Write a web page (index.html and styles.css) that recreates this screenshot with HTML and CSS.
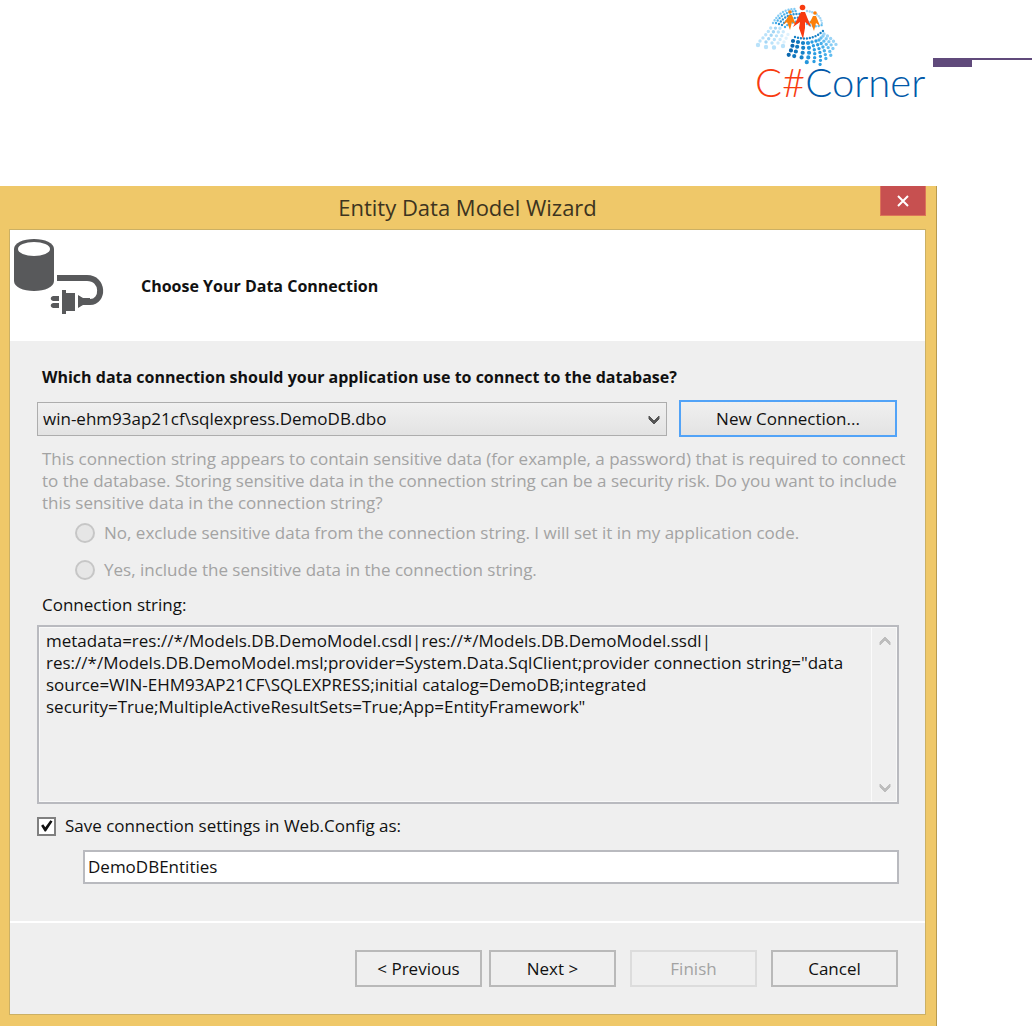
FILE: index.html
```html
<!DOCTYPE html>
<html lang="en">
<head>
  <meta charset="UTF-8">
  <meta name="viewport" content="width=device-width, initial-scale=1.0">
  <title>Entity Data Model Wizard</title>
  <link rel="stylesheet" href="styles.css">
</head>
<body>
<header class="page-header">
  <div class="logo">
    <svg class="logo-mark" width="84" height="62" viewBox="0 0 84 62" fill="none" stroke-linecap="round">
      <!-- upper swirl -->
      <g stroke-width="3.4">
        <path d="M5 37 Q12 30 17 22" stroke="#b9e2fa" stroke-dasharray="0 4.2"/>
        <path d="M11 38 Q17 31 21 23" stroke="#a3d6f5" stroke-dasharray="0 4.2"/>
        <path d="M17 39 Q22 32 25 24" stroke="#b9e2fa" stroke-dasharray="0 4.2"/>
        <path d="M23 39 Q27 33 29 25" stroke="#cdeafb" stroke-dasharray="0 4.2"/>
        <path d="M29 38 Q32 33 34 28" stroke="#e0f2fd" stroke-dasharray="0 4.2"/>
      </g>
      <g stroke-width="2.4">
        <path d="M18 19 Q26 4 42 5" stroke="#83cbf4" stroke-dasharray="0 3"/>
        <path d="M21 19 Q28 7 43 7" stroke="#46aee9" stroke-dasharray="0 3"/>
        <path d="M24 20 Q31 9 46 10" stroke="#2a91d2" stroke-dasharray="0 3"/>
        <path d="M27 21 Q34 12 50 14" stroke="#2a91d2" stroke-dasharray="0 3"/>
        <path d="M30 23 Q38 15 56 18" stroke="#46aee9" stroke-dasharray="0 3"/>
        <path d="M52 7 Q66 9 67 20" stroke="#a3d6f5" stroke-dasharray="0 2.6"/>
        <path d="M52 20 Q60 24 67 21" stroke="#62bdf0" stroke-dasharray="0 3"/>
      </g>
      <path d="M3 41h0M11 43h0M19 43.500h0M28 42h0" stroke="#b9e2fa" stroke-width="4.400"/>
      <!-- lower swirl -->
      <g stroke-width="4.2">
        <path d="M38 37 Q38 44 33 52" stroke="#0a68b0" stroke-dasharray="0 4.9"/>
        <path d="M43 38 Q42 46 38 55" stroke="#0f76bd" stroke-dasharray="0 4.9"/>
        <path d="M48 39 Q49 48 45 58" stroke="#1682c8" stroke-dasharray="0 4.9"/>
        <path d="M53 39 Q56 49 51 60" stroke="#2596dc" stroke-dasharray="0 4.9"/>
      </g>
      <g stroke-width="3.4">
        <path d="M57 38 Q62 50 58 61" stroke="#2b9de2" stroke-dasharray="0 4"/>
        <path d="M61 37 Q67 49 65 61" stroke="#2b9de2" stroke-dasharray="0 4"/>
        <path d="M64 36 Q71 46 71 58" stroke="#46aee9" stroke-dasharray="0 4"/>
        <path d="M66 34 Q75 43 76 53" stroke="#62bdf0" stroke-dasharray="0 4"/>
        <path d="M68 32 Q77 39 79 48" stroke="#83cbf4" stroke-dasharray="0 4"/>
        <path d="M69 30 Q77 34 82 42" stroke="#9bd4f6" stroke-dasharray="0 4"/>
      </g>
      <path d="M40 33 Q56 38 68 27" stroke="#1682c8" stroke-width="2.4" stroke-dasharray="0 3"/>
      <!-- people -->
      <g fill="#fb7f0a">
        <circle cx="35" cy="8" r="1.800"/>
        <path d="M34 11h3l4 10-4-3-2 8-3-8-4 3z"/>
        <circle cx="60" cy="9" r="1.800"/>
        <path d="M58 12h3l4 10-4-3-2 8-3-8-3 3z"/>
      </g>
      <g fill="#f83b10">
        <circle cx="47.500" cy="3.500" r="2.800"/>
        <path d="M46 8h4l6 15-6-5v6l-2 11-4-11 1-6-7 5z"/>
      </g>
    </svg>
    <div class="logo-text"><span class="logo-sharp">C#</span>Corner</div>
  </div>
  <div class="header-rule"></div>
</header>

<main class="window">
  <div class="title-bar">
    <h1>Entity Data Model Wizard</h1>
    <button class="close-button" type="button" aria-label="Close">
      <svg width="12" height="12" viewBox="0 0 12 12"><path d="M1 1l10 10M11 1L1 11" stroke="#fff" stroke-width="2"/></svg>
    </button>
  </div>

  <form class="wizard">
    <div class="banner">
      <svg width="90" height="78" viewBox="0 0 90 78">
        <path d="M0 10C0 4 9 0 20 0s20 4 20 10v32c0 6-9 10-20 10S0 48 0 42z" fill="#58595b"/>
        <ellipse cx="20" cy="10" rx="16" ry="7" fill="#fff"/>
        <path d="M43 39h30c17 0 17 24 3 24h-3" fill="none" stroke="#58595b" stroke-width="6"/>
        <path d="M48 51h4v3h9v18h-9v3h-4zM64 56l5 3h7v7h-7l-5 3zM45 57v5h-6c-3-1-3-4 0-5zM45 64v5h-6c-3-1-3-4 0-5z" fill="#58595b"/>
      </svg>
      <h2>Choose Your Data Connection</h2>
    </div>

    <div class="content">
      <label class="question" for="connection">Which data connection should your application use to connect to the database?</label>
      <div class="connection-row">
        <div class="select-box">
          <select id="connection" name="connection">
            <option>win-ehm93ap21cf\sqlexpress.DemoDB.dbo</option>
          </select>
          <svg class="select-arrow" width="12" height="10" viewBox="0 0 12 10"><path d="M1 1l5 5 5-5v3L6 9 1 4z" fill="#555" stroke="#555"/></svg>
        </div>
        <button class="new-connection" type="button">New Connection...</button>
      </div>

      <p class="notice">This connection string appears to contain sensitive data (for example, a password) that is required to connect<br>to the database. Storing sensitive data in the connection string can be a security risk. Do you want to include<br>this sensitive data in the connection string?</p>
      <div class="options">
        <label><input type="radio" name="sensitive" value="no" disabled>No, exclude sensitive data from the connection string. I will set it in my application code.</label>
        <label><input type="radio" name="sensitive" value="yes" disabled>Yes, include the sensitive data in the connection string.</label>
      </div>

      <label class="string-label" for="connection_string">Connection string:</label>
      <div class="string-box">
        <textarea id="connection_string" name="connection_string" readonly>metadata=res://*/Models.DB.DemoModel.csdl|res://*/Models.DB.DemoModel.ssdl|
res://*/Models.DB.DemoModel.msl;provider=System.Data.SqlClient;provider connection string="data
source=WIN-EHM93AP21CF\SQLEXPRESS;initial catalog=DemoDB;integrated
security=True;MultipleActiveResultSets=True;App=EntityFramework"</textarea>
        <div class="scroll-track">
          <svg width="12" height="10" viewBox="0 0 12 10"><path d="M1 9l5-5 5 5V6L6 1 1 6z" fill="#bdbdbd" stroke="#bdbdbd"/></svg>
          <svg width="12" height="10" viewBox="0 0 12 10"><path d="M1 1l5 5 5-5v3L6 9 1 4z" fill="#bdbdbd" stroke="#bdbdbd"/></svg>
        </div>
      </div>

      <label class="save-row"><input type="checkbox" name="save_settings" checked>Save connection settings in Web.Config as:</label>
      <input class="entity-name" type="text" name="entity_name" value="DemoDBEntities" aria-label="Connection settings name">
    </div>

    <div class="actions">
      <button type="button">&lt; Previous</button>
      <button class="next" type="button">Next &gt;</button>
      <button class="finish" type="button" disabled>Finish</button>
      <button type="button">Cancel</button>
    </div>
  </form>
</main>
</body>
</html>
```
FILE: styles.css
```css
* {
  box-sizing: border-box;
}
body {
  margin: 0;
  background: #fff;
  color: #111;
  font-family: "Open Sans", "Noto Sans", sans-serif;
  font-size: 17px;
  line-height: 22px;
}
h1, h2, p {
  margin: 0;
}
button, input, select, textarea {
  font: inherit;
  color: inherit;
}
svg {
  display: block;
}
.page-header {
  display: flex;
  justify-content: flex-end;
  height: 186px;
  padding-top: 4px;
}
.logo {
  width: 178px;
}
.logo-text {
  color: #0059a9;
  font-family: "Lato", "Inter", sans-serif;
  font-size: 40px;
  font-weight: 300;
  line-height: 32px;
}
.logo-sharp {
  color: #f83b10;
}
.header-rule {
  width: 99px;
  height: 9px;
  margin-top: 54px;
  background: linear-gradient(#604a7b, #604a7b) 0 0 / 39px 9px no-repeat;
  border-top: 2px solid #604a7b;
}
.window {
  margin-right: 95px;
  padding: 0 10px 11px 9px;
  background: #efc869;
  border-right: 1px solid #b89a4e;
  border-bottom: 1px solid #b89a4e;
}
.title-bar {
  display: flex;
  align-items: flex-start;
  height: 43px;
}
.title-bar h1 {
  flex: 1;
  padding-left: 46px;
  font-size: 22px;
  font-weight: 400;
  line-height: 42px;
  text-align: center;
  color: #3d3420;
}
.close-button {
  display: flex;
  align-items: center;
  justify-content: center;
  width: 46px;
  height: 30px;
  padding: 0;
  background: #c75050;
  border: 1px solid #dc7358;
  border-top: 0;
}
.wizard {
  background: #efefef;
  border: 1px solid #cbb064;
}
.banner {
  display: flex;
  align-items: center;
  height: 111px;
  padding: 0 4px;
  background: #fff;
}
.banner svg {
  margin-top: -16px;
}
.banner h2 {
  padding-left: 37px;
  font-size: 16px;
}
.content {
  display: flex;
  flex-direction: column;
  height: 580px;
  padding: 25px 26px 0 27px;
}
.question {
  margin-left: 5px;
  font-size: 16px;
  font-weight: 700;
}
.connection-row {
  display: flex;
  align-items: center;
  gap: 12px;
  margin: 12px 2px 11px 0;
}
.select-box {
  position: relative;
  flex: 1;
}
.select-box select {
  width: 100%;
  height: 34px;
  padding: 0 5px;
  appearance: none;
  background: linear-gradient(#f0f0f0, #e3e3e3);
  border: 1px solid #adadad;
  border-radius: 0;
}
.select-arrow {
  position: absolute;
  top: 13px;
  right: 7px;
  pointer-events: none;
}
.new-connection {
  width: 218px;
  height: 37px;
  background: linear-gradient(#f0f0f0, #e3e3e3);
  border: 2px solid #52a3f7;
}
.notice {
  margin-left: 5px;
  color: #a3a3a3;
  white-space: nowrap;
}
.options {
  display: flex;
  flex-direction: column;
  gap: 15px;
  margin: 8px 0 13px 38px;
  color: #a3a3a3;
}
.options label, .save-row {
  display: flex;
  align-items: center;
}
.options input {
  appearance: none;
  width: 20px;
  height: 20px;
  margin: 0 9px 0 0;
  background: #e6e6e6;
  border: 2px solid #c6c6c6;
  border-radius: 50%;
}
.string-label {
  margin-left: 5px;
}
.string-box {
  display: flex;
  height: 179px;
  margin: 9px 0 11px;
  border: 2px solid #b9babf;
  box-shadow: inset 0 0 0 1px #f8f8f8;
}
.string-box textarea {
  flex: 1;
  min-width: 0;
  padding: 3px 7px;
  background: none;
  border: 0;
  resize: none;
  white-space: pre;
  overflow: hidden;
}
.scroll-track {
  display: flex;
  flex-direction: column;
  align-items: center;
  justify-content: space-between;
  width: 26px;
  padding: 9px 0;
  border-left: 1px solid #fbfbfb;
}
.save-row input {
  appearance: none;
  width: 19px;
  height: 19px;
  margin: 0 9px 0 0;
  background: #fff;
  border: 2px solid #808080;
}
.save-row input:checked::before {
  content: "";
  display: block;
  width: 15px;
  height: 15px;
  background: #111;
  clip-path: polygon(14% 48%, 28% 38%, 42% 58%, 76% 12%, 90% 20%, 46% 86%, 38% 86%);
}
.entity-name {
  height: 34px;
  margin: 13px 0 0 46px;
  padding: 0 3px 2px;
  background: #fff;
  border: 2px solid #b9babf;
}
.actions {
  display: flex;
  justify-content: flex-end;
  height: 93px;
  padding: 27px 27px 0;
  border-top: 2px solid #fff;
}
.actions button {
  width: 127px;
  height: 37px;
  margin-left: 14px;
  background: #efefef;
  border: 2px solid #b9b9b9;
}
.actions .next {
  margin-left: 7px;
}
.actions .finish {
  color: #a3a3a3;
  border-color: #dcdcdc;
}
```
